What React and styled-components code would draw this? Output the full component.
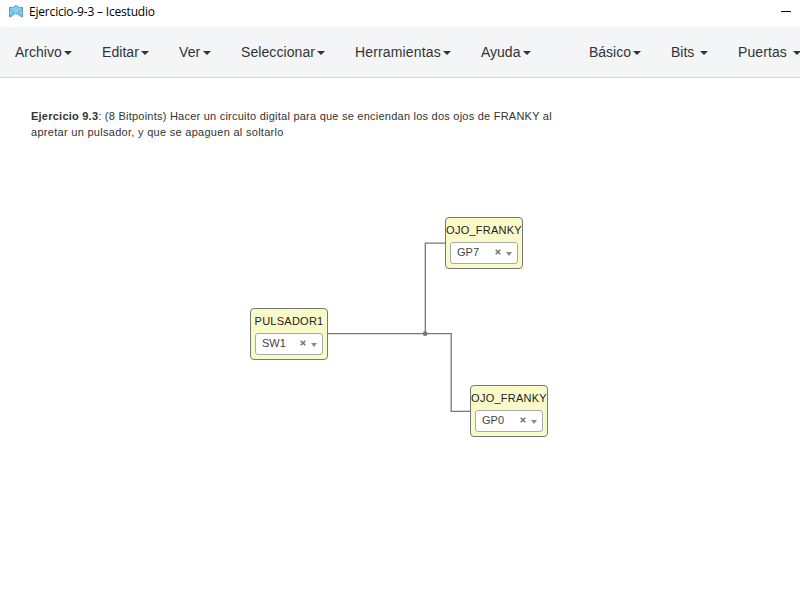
import React from "react";
import styled, { createGlobalStyle } from "styled-components";

const GlobalStyle = createGlobalStyle`
  *, *::before, *::after { box-sizing: border-box; }
  body { margin: 0; background: #fff; overflow: hidden; }
`;

const Window = styled.div`
  display: flex;
  flex-direction: column;
  width: 800px;
  height: 600px;
  overflow: hidden;
  background: #fff;
  color: #333;
  font-family: "Liberation Sans", Arial, sans-serif;
`;

const TitleBar = styled.header`
  display: flex;
  align-items: center;
  flex: 0 0 27px;
  padding: 0 9px 3px 8px;
  color: #000;
`;

const Title = styled.span`
  flex: 1;
  margin-left: 5px;
  font: 12px/16px "Open Sans", "Noto Sans", sans-serif;
  letter-spacing: -0.19px;
  white-space: nowrap;
`;

const MinimizeButton = styled.button`
  width: 10px;
  height: 1px;
  margin-top: -1px;
  padding: 0;
  border: 0;
  background: #000;
`;

const NavBar = styled.nav`
  display: flex;
  justify-content: space-between;
  flex: 0 0 51px;
  background: #f4f5f7;
  border-bottom: 1px solid #d6d8db;
`;

const MenuGroup = styled.div`
  display: flex;
  flex: 0 0 ${(p) => p.$width}px;
`;

const MenuItem = styled.button`
  display: flex;
  align-items: center;
  justify-content: space-between;
  flex: 0 0 ${(p) => p.$width}px;
  height: 50px;
  padding: 0 15px;
  border: 0;
  background: transparent;
  color: #333;
  font: 14px/20px "Liberation Sans", Arial, sans-serif;
  letter-spacing: ${(p) => p.$spacing}px;
  white-space: nowrap;
`;

const Caret = styled.span`
  flex: none;
  margin-top: 2px;
  border-top: 4px solid #333;
  border-left: 4px solid transparent;
  border-right: 4px solid transparent;
`;

const Canvas = styled.main`
  position: relative;
  flex: 1;
`;

const Note = styled.p`
  position: absolute;
  left: 31px;
  top: 30px;
  margin: 0;
  font-size: 11px;
  line-height: 16px;
  color: #333;
`;

const NoteLine = styled.span`
  display: block;
  letter-spacing: ${(p) => p.$spacing}px;
  white-space: nowrap;
`;

const Wires = styled.svg`
  position: absolute;
  left: 0;
  top: 0;
`;

const Block = styled.section`
  position: absolute;
  left: ${(p) => p.$x}px;
  top: ${(p) => p.$y}px;
  display: flex;
  flex-direction: column;
  width: 78px;
  height: 52px;
  padding: 5px 4px 0;
  border: 1px solid #777;
  border-radius: 4px;
  background: #fafac8;
`;

const BlockName = styled.div`
  align-self: center;
  font-size: 11px;
  line-height: 15px;
  letter-spacing: 0.25px;
  white-space: nowrap;
  color: #222;
`;

const PinSelect = styled.div`
  display: flex;
  align-items: center;
  width: 68px;
  height: 22px;
  margin-top: 4px;
  padding: 0 5px 0 6px;
  border: 1px solid #aaa;
  border-radius: 3px;
  background: #fff;
  color: #444;
  font-size: 11px;
  line-height: 20px;
`;

const Pin = styled.span`
  flex: 1;
  margin-top: -2px;
`;

const ClearMark = styled.svg`
  margin: -2px 5px 0 0;
`;

const SmallCaret = styled(Caret)`
  border-width: 4px 3px 0;
  border-top-color: #888;
`;

const menus = [
  ["Archivo", 87, 0],
  ["Editar", 77, 0.05],
  ["Ver", 62, 0.1],
  ["Seleccionar", 114, 0.08],
  ["Herramientas", 126, 0.15],
  ["Ayuda", 80, 0],
];

const collections = [
  ["Básico", 82, 0],
  ["Bits", 67, 0],
  ["Puertas", 93, 0.1],
];

const blocks = [
  { name: "OJO_FRANKY", pin: "GP7", x: 445, y: 139 },
  { name: "PULSADOR1", pin: "SW1", x: 250, y: 230 },
  { name: "OJO_FRANKY", pin: "GP0", x: 470, y: 307 },
];

function Logo() {
  return (
    <svg width="16" height="16" viewBox="0 0 16 16">
      <path d="M1 3 4.5 3 8 1 11.5 3 15 3V13.5L11.5 12 10 10H6L4.5 12 1 13.5Z" fill="#7fd0f1" />
      <path
        d="M1.5 3.5H4.5L8 1.5 11.5 3.5H14.5V13L11.5 12 10 10H6L4.5 12 1.5 13Z"
        fill="none"
        stroke="#3f7f9d"
        strokeWidth="0.8"
        strokeDasharray="1.3 0.7"
      />
      <path d="M1.5 4 6 9.5M14.5 4 10 9.5M2 12 5.5 9.5M14 12 10.5 9.5" stroke="#4b8eab" strokeWidth="0.6" />
    </svg>
  );
}

function Menu({ label, width, spacing }) {
  return (
    <MenuItem $width={width} $spacing={spacing}>
      {label}
      <Caret />
    </MenuItem>
  );
}

function PinBlock({ name, pin, x, y }) {
  return (
    <Block $x={x} $y={y}>
      <BlockName>{name}</BlockName>
      <PinSelect>
        <Pin>{pin}</Pin>
        <ClearMark width="6" height="6" viewBox="0 0 6 6">
          <path d="M.7 .7 5.3 5.3M5.3 .7.7 5.3" stroke="#777" strokeWidth="1.6" />
        </ClearMark>
        <SmallCaret />
      </PinSelect>
    </Block>
  );
}

export default function App() {
  return (
    <Window>
      <GlobalStyle />
      <TitleBar>
        <Logo />
        <Title>Ejercicio-9-3 – Icestudio</Title>
        <MinimizeButton aria-label="Minimizar" />
      </TitleBar>
      <NavBar>
        <MenuGroup $width={574}>
          {menus.map(([label, width, spacing]) => (
            <Menu key={label} label={label} width={width} spacing={spacing} />
          ))}
        </MenuGroup>
        <MenuGroup $width={226}>
          {collections.map(([label, width, spacing]) => (
            <Menu key={label} label={label} width={width} spacing={spacing} />
          ))}
        </MenuGroup>
      </NavBar>
      <Canvas>
        <Note>
          <NoteLine $spacing={0.235}>
            <b>Ejercicio 9.3</b>: (8 Bitpoints) Hacer un circuito digital para que se enciendan los dos ojos de FRANKY al
          </NoteLine>
          <NoteLine $spacing={0.29}>apretar un pulsador, y que se apaguen al soltarlo</NoteLine>
        </Note>
        <Wires width="800" height="522" viewBox="0 78 800 522" fill="none" stroke="#777" strokeWidth="1.3">
          <path d="M327 333.6H425.3V243.2H446" />
          <path d="M425 333.6H451.2V411.3H471" />
          <circle cx="425.2" cy="333.7" r="2.4" fill="#777" stroke="none" />
        </Wires>
        {blocks.map((block) => (
          <PinBlock key={block.pin} {...block} />
        ))}
      </Canvas>
    </Window>
  );
}
